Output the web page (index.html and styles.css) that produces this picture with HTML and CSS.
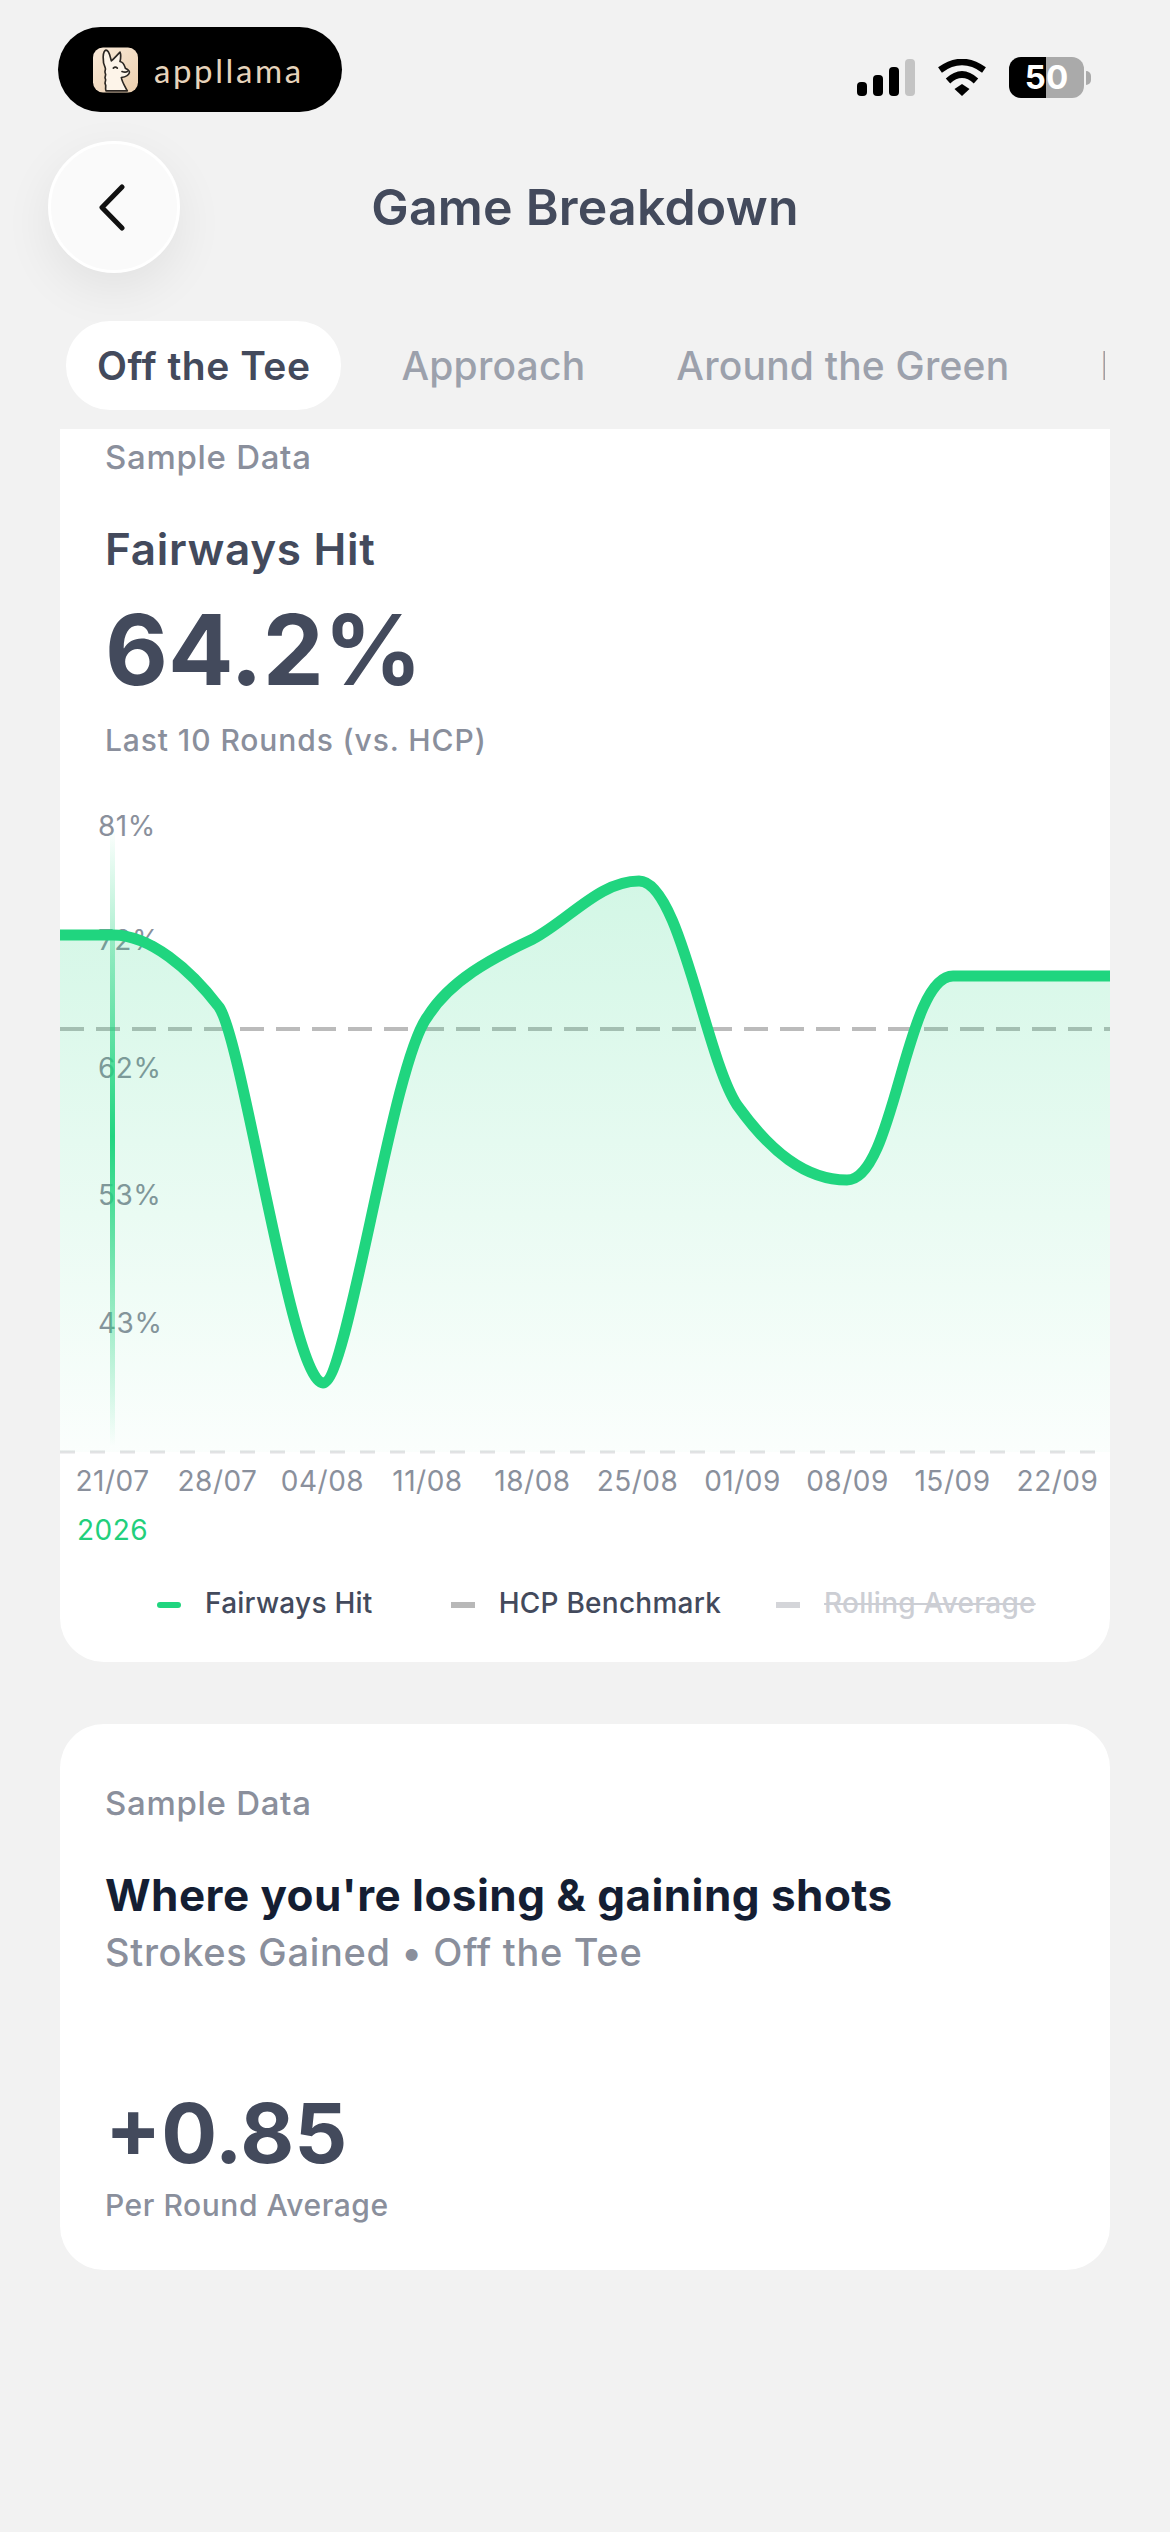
FILE: index.html
```html
<!DOCTYPE html>
<html lang="en">
<head>
    <meta charset="UTF-8">
    <title>Game Breakdown</title>
    <meta name="viewport" content="width=device-width, initial-scale=1.0">
    <link rel="stylesheet" href="styles.css">
</head>
<body>

    <!-- status bar -->
    <div class="status-bar">
        <div class="brand-pill">
            <svg class="brand-icon" viewBox="0 0 135 135">
                <defs>
                    <linearGradient id="iconBg" x1="0" y1="0" x2="1" y2="1">
                        <stop offset="0" stop-color="#f9ead9"/>
                        <stop offset="1" stop-color="#eccfae"/>
                    </linearGradient>
                </defs>
                <rect width="135" height="135" rx="30" fill="url(#iconBg)"/>
                <g transform="translate(-25,-28)" fill="none" stroke="#2b2622" stroke-width="5" stroke-linecap="round" stroke-linejoin="round">
                    <path d="M62 90 C52 70 54 38 64 36 C74 36 76 55 80 68 C88 62 96 52 106 42 C110 52 108 62 106 70 C118 72 120 84 122 90 C130 94 136 98 134 104 C132 112 122 116 110 118 C112 132 122 146 128 158 L64 158 C60 150 66 144 62 138 C58 132 66 128 62 122 C58 116 66 112 62 106 C58 100 64 96 62 90 Z" fill="#fdf4e9"/>
                    <path d="M86 90 Q92 84 98 90"/>
                    <path d="M112 100 Q122 104 128 100"/>
                </g>
            </svg>
            <span class="brand-name">appllama</span>
        </div>
        <div class="status-icons">
            <div class="signal">
                <span class="bar bar-1"></span>
                <span class="bar bar-2"></span>
                <span class="bar bar-3"></span>
                <span class="bar bar-4"></span>
            </div>
            <svg class="wifi" viewBox="0 0 50 37">
                <path d="M3 11 Q25 -5 47 11" fill="none" stroke="#000" stroke-width="6.5"/>
                <path d="M11 22 Q25 9 39 22" fill="none" stroke="#000" stroke-width="6.5"/>
                <polygon points="17.5,30 25,25 32.5,30 25,37" fill="#000"/>
            </svg>
            <div class="battery-wrap">
                <div class="battery">50</div>
                <span class="battery-nub"></span>
            </div>
        </div>
    </div>

    <!-- header -->
    <div class="header">
        <button class="back-btn" aria-label="Back">
            <svg viewBox="0 0 26 47" width="26" height="47">
                <path d="M23 3 L3 23.5 L23 44" fill="none" stroke="#111" stroke-width="5" stroke-linecap="round" stroke-linejoin="round"/>
            </svg>
        </button>
        <h1 class="page-title">Game Breakdown</h1>
    </div>

    <!-- tabs -->
    <div class="tabs">
        <div class="tab active">Off the Tee</div>
        <div class="tab">Approach</div>
        <div class="tab">Around the Green</div>
        <div class="tab">Putting</div>
    </div>

    <!-- fairways card -->
    <div class="card card-chart">
        <div class="card-head">
            <p class="sample-label">Sample Data</p>
            <h2 class="metric-title">Fairways Hit</h2>
            <div class="metric-value">64.2%</div>
            <p class="metric-sub">Last 10 Rounds (vs. HCP)</p>
        </div>

        <div class="chart">
            <span class="y-label" style="top: 6px">81%</span>
            <span class="y-label" style="top: 120px">72%</span>
            <span class="y-label" style="top: 248px">62%</span>
            <span class="y-label" style="top: 375px">53%</span>
            <span class="y-label" style="top: 503px">43%</span>
            <svg class="chart-svg" viewBox="60 800 1050 656">
                <defs>
                    <linearGradient id="areaFill" gradientUnits="userSpaceOnUse" x1="0" y1="880" x2="0" y2="1451">
                        <stop offset="0" stop-color="#22d580" stop-opacity="0.2"/>
                        <stop offset="1" stop-color="#22d580" stop-opacity="0.02"/>
                    </linearGradient>
                    <linearGradient id="cursorFill" gradientUnits="userSpaceOnUse" x1="0" y1="826" x2="0" y2="1445">
                        <stop offset="0" stop-color="#22d580" stop-opacity="0"/>
                        <stop offset="0.5" stop-color="#22d580" stop-opacity="1"/>
                        <stop offset="1" stop-color="#22d580" stop-opacity="0"/>
                    </linearGradient>
                </defs>
                <line x1="60" y1="1028" x2="1110" y2="1028" stroke="#bbbbbb" stroke-width="4" stroke-dasharray="24 12"/>
                <line x1="60" y1="1451" x2="1110" y2="1451" stroke="#e2e2e4" stroke-width="3" stroke-dasharray="15 15"/>
                <path fill="url(#areaFill)" d="M60 934 H113 C150 934 190 968 219 1006 C243 1040 292 1382 323 1382 C348 1382 392 1060 428 1015 C450 980 490 958 533 938 C570 918 600 880 639 880 C680 880 705 1055 737 1104 C770 1150 805 1179 847 1179 C895 1179 905 975 953 975 H1110 V1451 H60 Z"/>
                <rect x="110" y="826" width="5" height="619" fill="url(#cursorFill)"/>
                <path fill="none" stroke="#20d57f" stroke-width="11" d="M60 934 H113 C150 934 190 968 219 1006 C243 1040 292 1382 323 1382 C348 1382 392 1060 428 1015 C450 980 490 958 533 938 C570 918 600 880 639 880 C680 880 705 1055 737 1104 C770 1150 805 1179 847 1179 C895 1179 905 975 953 975 H1110"/>
            </svg>
        </div>

        <div class="x-axis">
            <span>21/07</span>
            <span>28/07</span>
            <span>04/08</span>
            <span>11/08</span>
            <span>18/08</span>
            <span>25/08</span>
            <span>01/09</span>
            <span>08/09</span>
            <span>15/09</span>
            <span>22/09</span>
        </div>
        <div class="x-axis">
            <span class="year">2026</span>
        </div>

        <div class="legend">
            <div class="legend-item first">
                <span class="swatch swatch-green"></span>
                <span>Fairways Hit</span>
            </div>
            <div class="legend-item">
                <span class="swatch swatch-grey"></span>
                <span>HCP Benchmark</span>
            </div>
            <div class="legend-item off">
                <span class="swatch swatch-light"></span>
                <span>Rolling Average</span>
            </div>
        </div>
    </div>

    <!-- strokes gained card -->
    <div class="card card-strokes">
        <p class="sample-label">Sample Data</p>
        <h2 class="strokes-title">Where you're losing &amp; gaining shots</h2>
        <p class="strokes-sub">Strokes Gained • Off the Tee</p>
        <div class="strokes-value">+0.85</div>
        <p class="strokes-note">Per Round Average</p>
    </div>

</body>
</html>
```

FILE: styles.css
```css
* {
    box-sizing: border-box;
    margin: 0;
    padding: 0;
}
body {
    width: 1170px;
    height: 2532px;
    overflow: hidden;
    background-color: #f2f2f2;
    font-family: Inter, "Noto Sans", sans-serif;
    color: #434a5c;
}

/* status bar */
.status-bar {
    display: flex;
    justify-content: space-between;
    align-items: flex-start;
    padding: 27px 79px 0 58px;
}
.brand-pill {
    width: 284px;
    height: 85px;
    border-radius: 43px;
    background: #000;
    display: flex;
    align-items: center;
    padding-left: 35px;
    gap: 16px;
}
.brand-icon {
    width: 45px;
    height: 46px;
}
.brand-name {
    font-family: Lato, sans-serif;
    font-weight: 400;
    font-size: 33px;
    letter-spacing: 2.6px;
    color: #e6d3bb;
}
.status-icons {
    display: flex;
    align-items: center;
    margin-top: 30px;
    gap: 22px;
}
.signal {
    display: flex;
    align-items: flex-end;
    gap: 6px;
    height: 37px;
}
.bar {
    width: 10px;
    background: #000;
    border-radius: 4px;
}
.bar-1 { height: 14px; }
.bar-2 { height: 21px; }
.bar-3 { height: 29px; }
.bar-4 { height: 37px; background: #c4c4c4; }
.wifi {
    width: 50px;
    height: 37px;
}
.battery-wrap {
    display: flex;
    align-items: center;
    gap: 2px;
}
.battery {
    width: 75px;
    height: 41px;
    border-radius: 12px;
    background: linear-gradient(90deg, #000 50%, #aaa 50%);
    color: #fff;
    font-weight: 700;
    font-size: 33px;
    line-height: 41px;
    text-align: center;
}
.battery-nub {
    width: 5px;
    height: 14px;
    background: #aaa;
    border-radius: 0 6px 6px 0;
}

/* header */
.header {
    display: grid;
    grid-template-columns: 131px 1fr 131px;
    align-items: center;
    padding: 0 48px;
    margin-top: 29px;
}
.back-btn {
    width: 132px;
    height: 132px;
    border-radius: 50%;
    border: 3px solid #fff;
    background: #fafafa;
    box-shadow: 0 16px 50px rgba(0, 0, 0, 0.07);
    display: flex;
    align-items: center;
    justify-content: center;
    padding-right: 4px;
}
.page-title {
    text-align: center;
    font-size: 50px;
    font-weight: 600;
    letter-spacing: 0.2px;
    color: #434a5c;
}

/* tabs */
.tabs {
    display: flex;
    gap: 29px;
    width: 1039px;
    margin: 48px 0 19px 66px;
    overflow: hidden;
}
.tab {
    flex-shrink: 0;
    height: 89px;
    line-height: 89px;
    padding: 0 31px;
    border-radius: 44px;
    font-size: 39px;
    font-weight: 500;
    letter-spacing: 0.2px;
    color: #9ca1ac;
}
.tab.active {
    background: #fff;
    color: #434a5c;
    font-weight: 600;
    letter-spacing: 0.5px;
}

/* cards */
.card {
    background: #fff;
    margin: 0 60px;
    border-radius: 44px;
}
.card-chart {
    height: 1233px;
    border-radius: 0 0 44px 44px;
}
.card-head {
    padding: 8px 45px 0;
}
.sample-label {
    font-size: 33px;
    line-height: 40px;
    font-weight: 500;
    letter-spacing: 0.7px;
    color: #8a8f9c;
}
.metric-title {
    font-size: 44px;
    line-height: 54px;
    font-weight: 600;
    letter-spacing: 0.7px;
    margin-top: 45px;
}
.metric-value {
    font-size: 97px;
    line-height: 120px;
    font-weight: 700;
    margin-top: 14px;
    color: #434a5c;
}
.metric-sub {
    font-size: 30px;
    line-height: 38px;
    font-weight: 500;
    letter-spacing: 0.9px;
    color: #8a8f9c;
    margin-top: 11px;
}

/* chart */
.chart {
    position: relative;
    height: 656px;
    margin-top: 42px;
}
.chart-svg {
    position: relative;
    display: block;
    width: 1050px;
    height: 656px;
}
.y-label {
    position: absolute;
    left: 38px;
    font-size: 28px;
    line-height: 38px;
    letter-spacing: 0.5px;
    color: #8a909c;
}
.x-axis {
    display: grid;
    grid-template-columns: repeat(10, 105px);
    margin-top: 5px;
    font-size: 28px;
    line-height: 38px;
    text-align: center;
    color: #8a909c;
    letter-spacing: 0.5px;
}
.x-axis + .x-axis {
    margin-top: 11px;
}
.year {
    color: #22cf7c;
}

/* legend */
.legend {
    display: flex;
    align-items: center;
    gap: 55px;
    padding-left: 97px;
    margin-top: 35px;
}
.legend-item {
    display: flex;
    align-items: center;
    gap: 24px;
    font-size: 28px;
    line-height: 38px;
    font-weight: 500;
    letter-spacing: 0.25px;
    color: #434a5c;
}
.legend-item.first {
    margin-right: 23px;
}
.legend-item.off {
    color: #ccced4;
    text-decoration: line-through;
}
.swatch {
    width: 24px;
    height: 6px;
    border-radius: 3px;
    margin-top: 4px;
}
.swatch-green { background: #20d57f; }
.swatch-grey { background: #b8b8b8; border-radius: 0; }
.swatch-light { background: #d4d5d9; border-radius: 0; }

/* strokes gained */
.card-strokes {
    height: 546px;
    margin-top: 62px;
    padding: 59px 45px 0;
}
.strokes-title {
    font-size: 44px;
    line-height: 54px;
    font-weight: 700;
    letter-spacing: 0.45px;
    color: #141e33;
    margin-top: 45px;
}
.strokes-sub {
    font-size: 38px;
    line-height: 50px;
    font-weight: 500;
    letter-spacing: 0.7px;
    color: #8a8f9c;
    margin-top: 5px;
}
.strokes-value {
    font-size: 83px;
    line-height: 96px;
    font-weight: 700;
    color: #434a5c;
    margin-top: 108px;
}
.strokes-note {
    font-size: 30px;
    line-height: 38px;
    font-weight: 500;
    letter-spacing: 0.55px;
    color: #8a8f9c;
    margin-top: 5px;
}
```
